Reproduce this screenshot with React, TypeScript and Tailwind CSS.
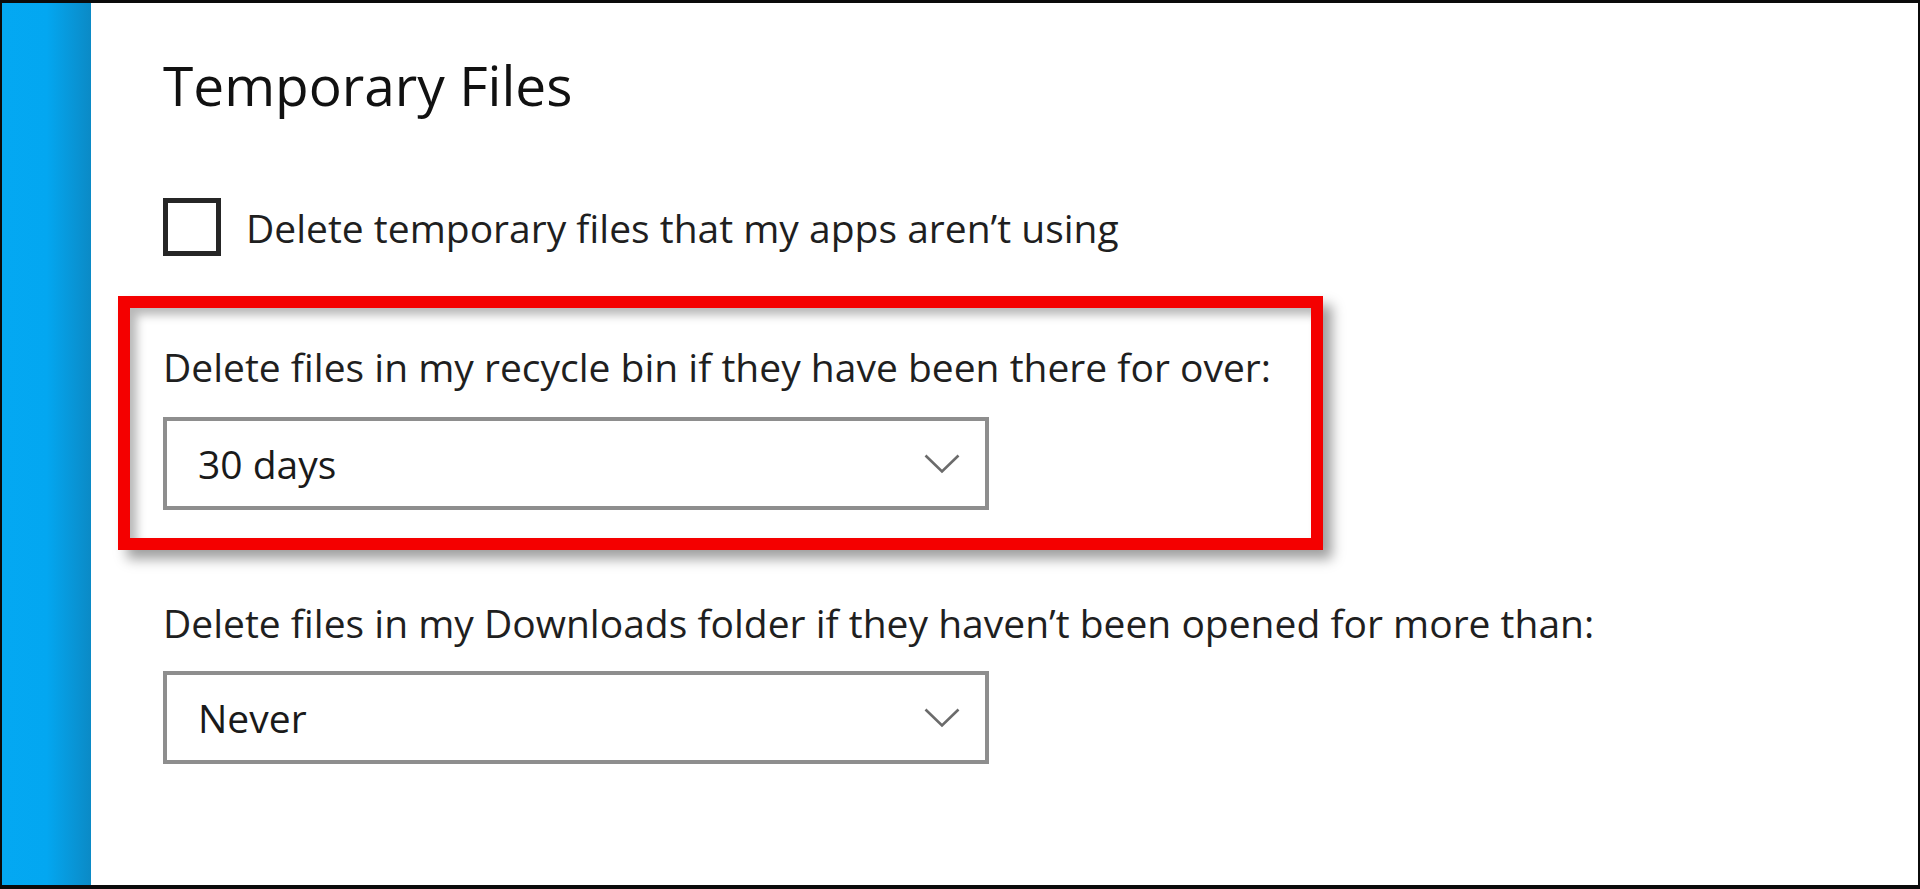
import React from 'react';

const Chevron: React.FC = () => (
  <svg width="36" height="20" viewBox="0 0 36 20" fill="none">
    <path d="M1.5 1.5 L18 17.5 L34.5 1.5" stroke="#6b6b6b" strokeWidth="2.6" />
  </svg>
);

const Dropdown: React.FC<{ value: string }> = ({ value }) => (
  <div className="w-[826px] h-[93px] border-[4px] border-[#8e8e8e] bg-white flex items-center justify-between pl-[31px] pr-[25px]">
    <span className="text-[39px] leading-none text-[#1a1a1a]">{value}</span>
    <Chevron />
  </div>
);

export default function App() {
  return (
    <div className="w-[1920px] h-[889px] bg-[#0b0b0b] pt-[3px] pb-[4px] px-[2px] flex font-['Open_Sans',sans-serif]">
      <div className="w-[89px] bg-gradient-to-r from-[#04a8f2] via-[#03a7f1] to-[#0b8ac6]" />
      <div className="flex-1 bg-white pl-[72px] pt-[54px]">
        <h1 className="text-[55px] leading-none font-normal text-[#111]">Temporary Files</h1>

        <label className="mt-[86px] flex items-center gap-[25px]">
          <span className="w-[58px] h-[58px] border-[5px] border-[#262626] bg-white" />
          <span className="text-[39px] leading-none text-[#1f1f1f]">
            Delete temporary files that my apps aren’t using
          </span>
        </label>

        <div className="mt-[40px] -ml-[45px] w-[1205px] h-[254px] border-[12px] border-[#f40000] pl-[33px] pt-[39px] shadow-[inset_7px_7px_10px_rgba(0,0,0,0.28),9px_9px_12px_rgba(0,0,0,0.38)]">
          <p className="text-[39px] leading-none text-[#1f1f1f]">
            Delete files in my recycle bin if they have been there for over:
          </p>
          <div className="mt-[31px]">
            <Dropdown value="30 days" />
          </div>
        </div>

        <p className="mt-[53px] text-[39px] leading-none text-[#1f1f1f]">
          Delete files in my Downloads folder if they haven’t been opened for more than:
        </p>
        <div className="mt-[29px]">
          <Dropdown value="Never" />
        </div>
      </div>
    </div>
  );
}
